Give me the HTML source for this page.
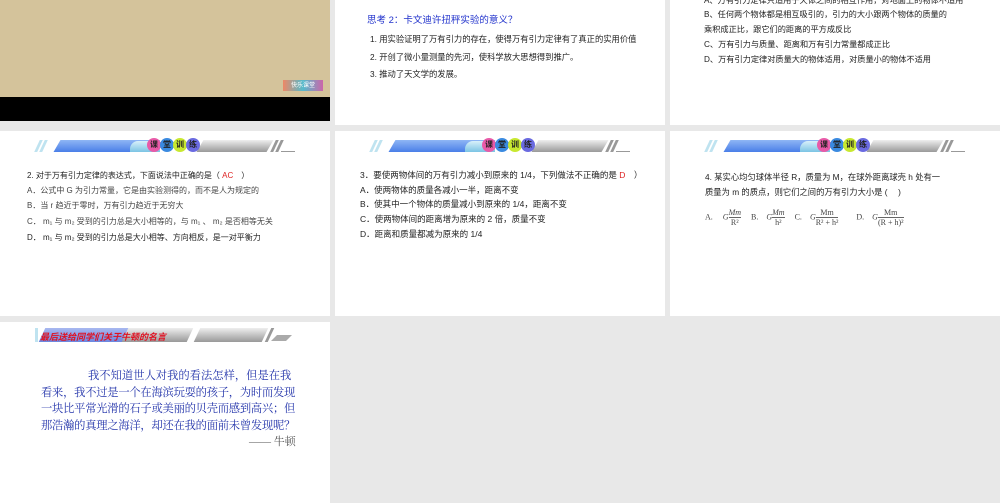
<!DOCTYPE html>
<html><head><meta charset="utf-8"><style>
body{margin:0;width:1000px;height:503px;background:#e8e8e8;position:relative;overflow:hidden;font-family:"Liberation Sans","Noto Sans CJK SC",sans-serif}
.s{position:absolute;background:#fff;overflow:hidden}
.t{position:absolute;white-space:nowrap;font-size:8px;color:#222}
.b{position:absolute;left:35px;top:7px;width:260px;height:16px}
.b .sl{position:absolute;top:2px;width:3px;height:12px;background:#bfe3f0;transform:skewX(-25deg)}
.b .blue{position:absolute;left:22px;top:2px;width:100px;height:12px;background:linear-gradient(#8fb6f5,#4a7fe8);transform:skewX(-30deg)}
.b .gray{position:absolute;left:165px;top:2px;width:70px;height:12px;background:linear-gradient(#eee,#999);transform:skewX(-30deg)}
.b .book{position:absolute;left:95px;top:3px;width:30px;height:11px;background:linear-gradient(#d8f0fa,#7cc4e4);border-radius:8px 8px 0 0}
.b .c{position:absolute;top:0;width:14px;height:14px;border-radius:50%;font-size:8px;font-weight:bold;text-align:center;line-height:14px;color:#222}
.q{position:absolute;white-space:nowrap;font-family:'Liberation Serif','Noto Serif CJK SC',serif;font-size:11.3px;color:#2233aa}
.fr{display:inline-block;vertical-align:middle;text-align:center;line-height:9px}
.fr span{border-top:1px solid #666;display:block}
</style></head><body>

<div class="s" style="left:0;top:0;width:330px;height:121px;background:#000">
<div style="position:absolute;left:0;top:0;width:330px;height:97px;background:#d4c39b"></div>
<div style="position:absolute;left:283px;top:80px;width:40px;height:11px;background:linear-gradient(90deg,#e86,#5bc,#c6a);font-size:6px;color:#fff;text-align:center">快乐课堂</div>
</div>

<div class="s" style="left:335px;top:0;width:330px;height:125px">
<div class="t" style="left:32px;top:12px;font-size:9.5px;color:#2233cc">思考 2：卡文迪许扭秤实验的意义？</div>
<div class="t" style="left:35px;top:33px;font-size:8.3px">1. 用实验证明了万有引力的存在，使得万有引力定律有了真正的实用价值</div>
<div class="t" style="left:35px;top:51px;font-size:8.3px">2. 开创了微小量测量的先河，使科学放大思想得到推广。</div>
<div class="t" style="left:35px;top:68px;font-size:8.3px">3. 推动了天文学的发展。</div>
</div>

<div class="s" style="left:670px;top:0;width:330px;height:125px">
<div class="t" style="left:34px;top:-6px;font-size:8.2px">A、万有引力定律只适用于天体之间的相互作用，对地面上的物体不适用</div>
<div class="t" style="left:34px;top:8px;font-size:8.2px">B、任何两个物体都是相互吸引的，引力的大小跟两个物体的质量的</div>
<div class="t" style="left:34px;top:23px;font-size:8.2px">乘积成正比，跟它们的距离的平方成反比</div>
<div class="t" style="left:34px;top:38px;font-size:8.2px">C、万有引力与质量、距离和万有引力常量都成正比</div>
<div class="t" style="left:34px;top:53px;font-size:8.2px">D、万有引力定律对质量大的物体适用，对质量小的物体不适用</div>
</div>

<div class="s" style="left:0;top:131px;width:330px;height:185px">
<div class="b"><div class="sl" style="left:2px"></div><div class="sl" style="left:7px"></div><div class="blue"></div><div class="book"></div><div class="gray"></div><div class="sl" style="left:238px;background:#999"></div><div class="sl" style="left:243px;background:#999"></div><div style="position:absolute;left:246px;top:13px;width:14px;height:1px;background:#999"></div>
<div class="c" style="left:112px;background:#e85aa8">课</div><div class="c" style="left:125px;background:#3a8ae0">堂</div><div class="c" style="left:138px;background:#c8e830">训</div><div class="c" style="left:151px;background:#6a6ae0">练</div></div>
<div class="t" style="left:27px;top:39px">2. 对于万有引力定律的表达式，下面说法中正确的是（ <span style="color:#d22">AC</span>　）</div>
<div class="t" style="left:27px;top:54px;color:#444">A．公式中 G 为引力常量，它是由实验测得的，而不是人为规定的</div>
<div class="t" style="left:27px;top:69px;color:#444">B．当 r 趋近于零时，万有引力趋近于无穷大</div>
<div class="t" style="left:27px;top:85px;color:#444">C． m₁ 与 m₂ 受到的引力总是大小相等的，与 m₁ 、 m₂ 是否相等无关</div>
<div class="t" style="left:27px;top:101px">D． m₁ 与 m₂ 受到的引力总是大小相等、方向相反，是一对平衡力</div>
</div>

<div class="s" style="left:335px;top:131px;width:330px;height:185px">
<div class="b"><div class="sl" style="left:2px"></div><div class="sl" style="left:7px"></div><div class="blue"></div><div class="book"></div><div class="gray"></div><div class="sl" style="left:238px;background:#999"></div><div class="sl" style="left:243px;background:#999"></div><div style="position:absolute;left:246px;top:13px;width:14px;height:1px;background:#999"></div>
<div class="c" style="left:112px;background:#e85aa8">课</div><div class="c" style="left:125px;background:#3a8ae0">堂</div><div class="c" style="left:138px;background:#c8e830">训</div><div class="c" style="left:151px;background:#6a6ae0">练</div></div>
<div class="t" style="left:25px;top:38px;font-size:8.5px">3．要使两物体间的万有引力减小到原来的 1/4，下列做法不正确的是 <span style="color:#d22">D</span>　）</div>
<div class="t" style="left:25px;top:53px;font-size:8.5px">A．使两物体的质量各减小一半，距离不变</div>
<div class="t" style="left:25px;top:67px;font-size:8.5px">B．使其中一个物体的质量减小到原来的 1/4，距离不变</div>
<div class="t" style="left:25px;top:82px;font-size:8.5px">C．使两物体间的距离增为原来的 2 倍，质量不变</div>
<div class="t" style="left:25px;top:97px;font-size:8.5px">D．距离和质量都减为原来的 1/4</div>
</div>

<div class="s" style="left:670px;top:131px;width:330px;height:185px">
<div class="b"><div class="sl" style="left:2px"></div><div class="sl" style="left:7px"></div><div class="blue"></div><div class="book"></div><div class="gray"></div><div class="sl" style="left:238px;background:#999"></div><div class="sl" style="left:243px;background:#999"></div><div style="position:absolute;left:246px;top:13px;width:14px;height:1px;background:#999"></div>
<div class="c" style="left:112px;background:#e85aa8">课</div><div class="c" style="left:125px;background:#3a8ae0">堂</div><div class="c" style="left:138px;background:#c8e830">训</div><div class="c" style="left:151px;background:#6a6ae0">练</div></div>
<div class="t" style="left:35px;top:40px;font-size:8.3px">4. 某实心均匀球体半径 R，质量为 M，在球外距离球壳 h 处有一</div>
<div class="t" style="left:35px;top:55px;font-size:8.3px">质量为 m 的质点，则它们之间的万有引力大小是 (　 )</div>
<div class="t" style="left:35px;top:77px;font-family:'Liberation Serif',serif;color:#444;font-size:8px">A.　 <i>G</i><span class="fr"><i>Mm</i><span>R²</span></span>　 B.　<i>G</i><span class="fr"><i>Mm</i><span>h²</span></span>　 C.　<i>G</i><span class="fr">Mm<span>R² + h²</span></span>　　 D.　<i>G</i><span class="fr">Mm<span>(R + h)²</span></span></div>
</div>

<div class="s" style="left:0;top:322px;width:330px;height:181px">
<div style="position:absolute;left:35px;top:6px;width:3px;height:14px;background:#bfe3f0"></div>
<div style="position:absolute;left:42px;top:6px;width:85px;height:14px;background:linear-gradient(#a8b8f0,#6b86e0);transform:skewX(-25deg)"></div>
<div style="position:absolute;left:125px;top:6px;width:65px;height:14px;background:linear-gradient(#eee,#999);transform:skewX(-25deg)"></div>
<div style="position:absolute;left:197px;top:6px;width:68px;height:14px;background:linear-gradient(#eee,#999);transform:skewX(-25deg)"></div>
<div style="position:absolute;left:268px;top:6px;width:3px;height:14px;background:#999;transform:skewX(-25deg)"></div>
<div style="position:absolute;left:274px;top:13px;width:15px;height:6px;background:#aaa;transform:skewX(-45deg)"></div>
<div class="t" style="left:40px;top:8px;font-size:9px;font-weight:bold;font-style:italic;color:#e01020">最后送给同学们关于牛顿的名言</div>
<div class="q" style="left:88px;top:45px">我不知道世人对我的看法怎样，但是在我</div>
<div class="q" style="left:41px;top:62px;letter-spacing:-0.25px">看来，我不过是一个在海滨玩耍的孩子，为时而发现</div>
<div class="q" style="left:41px;top:78px;letter-spacing:-0.25px">一块比平常光滑的石子或美丽的贝壳而感到高兴；但</div>
<div class="q" style="left:41px;top:95px;letter-spacing:-0.25px">那浩瀚的真理之海洋，却还在我的面前未曾发现呢？</div>
<div class="q" style="left:249px;top:111px;color:#555;font-size:11px">—— 牛顿</div>
</div>
</body></html>
